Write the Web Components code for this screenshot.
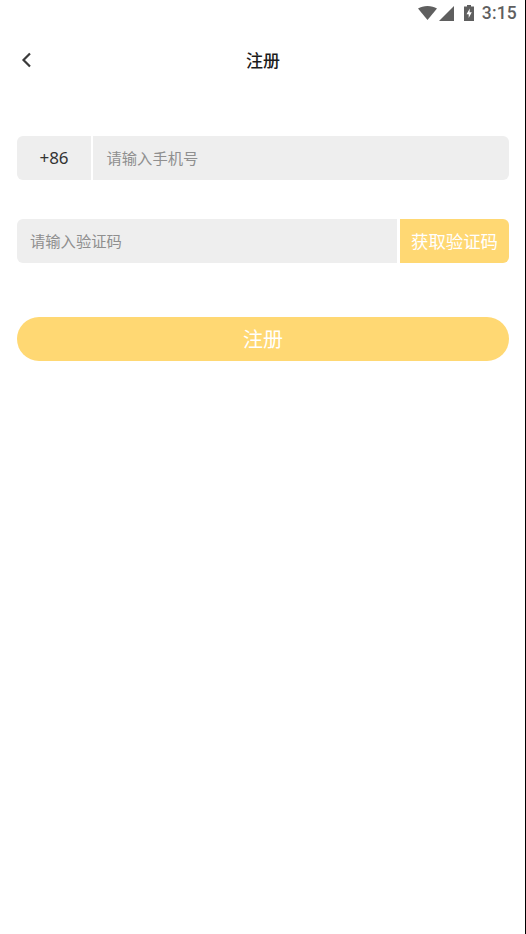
<!DOCTYPE html>
<html lang="zh">
<head>
<meta charset="utf-8">
<title>注册</title>
<style>
  html, body { margin: 0; padding: 0; background: #fff; }
  body { font-family: "Noto Sans CJK SC", "Noto Sans", sans-serif; }
</style>
</head>
<body>
<register-page></register-page>

<script>
class StatusBar extends HTMLElement {
  constructor() {
    super();
    this.attachShadow({ mode: "open" });
  }

  connectedCallback() {
    this.shadowRoot.innerHTML = `
      <style>
        :host {
          display: flex;
          align-items: center;
          justify-content: flex-end;
          height: 26px;
          padding-right: 9px;
          color: #5f5f5f;
        }
        svg { display: block; fill: currentColor; }
        .wifi { margin-right: 2px; }
        .signal { margin-right: 10px; }
        .battery { margin-right: 8px; }
        .time { font: 500 17.500px/26px Roboto, sans-serif; letter-spacing: 0.2px; }
      </style>
      <svg class="wifi" width="19" height="14" viewBox="0 0 19 14"><path d="M0 2.500C2.600.9 5.900 0 9.500 0s6.900.9 9.500 2.500L9.500 14z"/></svg>
      <svg class="signal" width="15" height="15" viewBox="0 0 15 15"><path d="M15 0v15H0z"/></svg>
      <svg class="battery" width="10" height="16" viewBox="0 0 10 16"><path fill-rule="evenodd" d="M3 0h4v1.500h3V16H0V1.500h3zM5.800 3.500 2.500 9.300h2.200v3.700L7.800 7.200H5.600z"/></svg>
      <span class="time">3:15</span>
    `;
  }
}

class NavBar extends HTMLElement {
  constructor() {
    super();
    this.attachShadow({ mode: "open" });
  }

  connectedCallback() {
    this.shadowRoot.innerHTML = `
      <style>
        :host {
          display: flex;
          align-items: center;
          justify-content: center;
          position: relative;
          height: 68px;
          color: #1c1c1c;
        }
        svg { position: absolute; left: 20px; top: 25px; }
        span { font-size: 17px; font-weight: 500; line-height: 24px; }
      </style>
      <svg width="12" height="18" viewBox="0 0 12 18" fill="none" stroke="#3a3a3a" stroke-width="2.200"><path d="M10 2.500 3.500 9l6.500 6.500"/></svg>
      <span><slot></slot></span>
    `;
  }
}

class InputRow extends HTMLElement {
  constructor() {
    super();
    this.attachShadow({ mode: "open" });
  }

  connectedCallback() {
    this.shadowRoot.innerHTML = `
      <style>
        :host {
          display: flex;
          height: 43.500px;
          margin: 0 17px;
          border-radius: 6px;
          overflow: hidden;
          font-size: 15.300px;
          line-height: 42.500px;
        }
        .prefix {
          flex: none;
          width: 74px;
          margin-right: 2px;
          background: #eee;
          color: #333;
          font-family: "Noto Sans", sans-serif;
          font-size: 17px;
          line-height: 44px;
          text-align: center;
        }
        .prefix:empty { display: none; }
        .field {
          flex: 1;
          background: #eee;
          color: #8f8f8f;
          padding-left: ${this.hasAttribute("prefix") ? 13.500 : 13}px;
        }
        .action {
          flex: none;
          width: 109px;
          margin-left: 3px;
          background: #ffd873;
          color: #fff;
          font-size: 17.400px;
          line-height: 43.500px;
          text-align: center;
        }
        .action:empty { display: none; }
      </style>
      <div class="prefix">${this.getAttribute("prefix") || ""}</div>
      <div class="field"><slot></slot></div>
      <div class="action">${this.getAttribute("action") || ""}</div>
    `;
  }
}

class SubmitButton extends HTMLElement {
  constructor() {
    super();
    this.attachShadow({ mode: "open" });
  }

  connectedCallback() {
    this.shadowRoot.innerHTML = `
      <style>
        :host {
          display: block;
          height: 43.500px;
          margin: 0 17px;
          border-radius: 22px;
          background: #ffd873;
          color: #fff;
          font-size: 20px;
          line-height: 43.500px;
          text-align: center;
        }
      </style>
      <slot></slot>
    `;
  }
}

class RegisterPage extends HTMLElement {
  constructor() {
    super();
    this.attachShadow({ mode: "open" });
  }

  connectedCallback() {
    this.shadowRoot.innerHTML = `
      <style>
        :host {
          display: block;
          height: 934px;
          box-shadow: inset -1px 0 0 #000;
          font-family: "Noto Sans CJK SC", "Noto Sans", sans-serif;
        }
        .form { display: flex; flex-direction: column; padding-top: 42px; }
        .code { margin-top: 39.500px; }
        .submit { margin-top: 54.500px; }
      </style>
      <status-bar></status-bar>
      <nav-bar>注册</nav-bar>
      <div class="form">
        <input-row prefix="+86">请输入手机号</input-row>
        <input-row class="code" action="获取验证码">请输入验证码</input-row>
        <submit-button class="submit">注册</submit-button>
      </div>
    `;
  }
}

customElements.define("status-bar", StatusBar);
customElements.define("nav-bar", NavBar);
customElements.define("input-row", InputRow);
customElements.define("submit-button", SubmitButton);
customElements.define("register-page", RegisterPage);
</script>
</body>
</html>
